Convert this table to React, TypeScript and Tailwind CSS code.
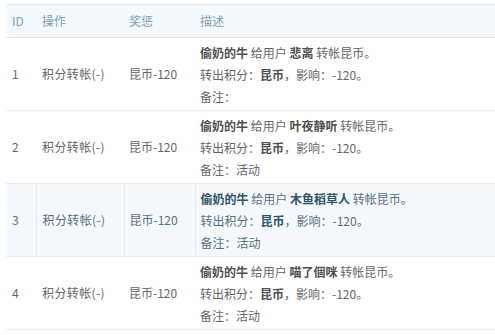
const rows = [
  { id: 1, user: "悲离", note: "" },
  { id: 2, user: "叶夜静听", note: "活动" },
  { id: 3, user: "木鱼稻草人", note: "活动", active: true },
  { id: 4, user: "喵了個咪", note: "活动" },
];

export default function App() {
  return (
    <div
      className="w-[495px] h-[335px] bg-white overflow-hidden pt-[4px] pl-[6px]"
      style={{ fontFamily: '"Noto Sans CJK SC", "Liberation Sans", sans-serif' }}
    >
      <table className="w-[489px] border-collapse text-[12px] text-[#666]">
        <thead>
          <tr className="h-[33px] bg-[#f3f9fc] border-t border-b border-[#d9eaf1] text-[#7ca0b4]">
            <th className="w-[30px] pl-[6px] text-left font-normal">ID</th>
            <th className="w-[88px] pl-[6px] text-left font-normal">操作</th>
            <th className="w-[71px] pl-[5px] text-left font-normal">奖惩</th>
            <th className="pl-[5px] text-left font-normal">描述</th>
          </tr>
        </thead>
        <tbody>
          {rows.map((r) => {
            const cell = r.active ? "border-r border-[#e6eef3]" : "";
            const strong = r.active ? "font-bold text-[#2b5467]" : "font-bold text-[#4f4f4f]";
            return (
              <tr
                key={r.id}
                className={
                  "h-[73px] border-b border-[#e6eef2] " +
                  (r.active ? "bg-[#f5f9fd] text-[#56707d]" : "")
                }
              >
                <td className={"pl-[6px] align-middle " + cell}>{r.id}</td>
                <td className={"pl-[6px] align-middle tracking-[0.4px] " + cell}>积分转帐(-)</td>
                <td className={"pl-[5px] align-middle " + cell}>昆币-120</td>
                <td className="pl-[5px] pt-[1px] align-middle leading-[22px]">
                  <div>
                    <span className={strong}>偷奶的牛</span> 给用户{" "}
                    <span className={strong}>{r.user}</span> 转帐昆币。
                  </div>
                  <div>
                    转出积分：<span className={strong}>昆币</span>，影响：-120。
                  </div>
                  <div>备注：{r.note}</div>
                </td>
              </tr>
            );
          })}
        </tbody>
      </table>
    </div>
  );
}
